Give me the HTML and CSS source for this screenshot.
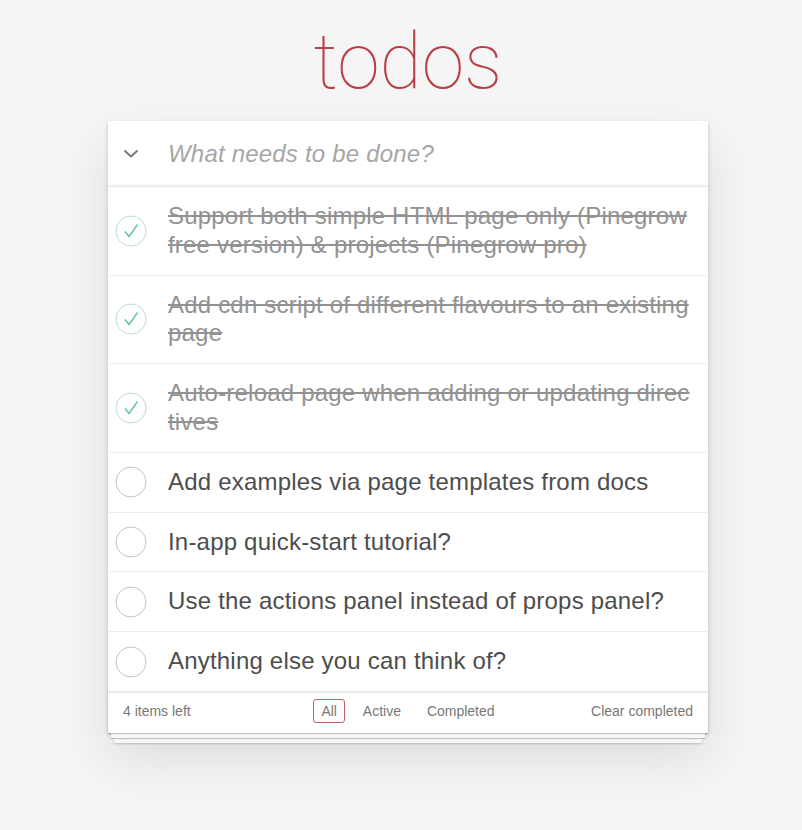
FILE: index.html
```html
<!DOCTYPE html>
<html lang="en">
<head>
    <meta charset="UTF-8">
    <meta name="viewport" content="width=device-width, initial-scale=1.0">
    <title>Todos</title>
    <link rel="stylesheet" href="styles.css">
</head>
<body>
    <div class="page">
        <h1 class="title">todos</h1>
        <section class="todoapp">
            <header class="header">
                <span class="toggle-all">
                    <svg width="16" height="10" viewBox="0 0 16 10"><polyline points="2,2 8,7.5 14,2" fill="none" stroke="#7a7a7a" stroke-width="2" stroke-linecap="round" stroke-linejoin="round"/></svg>
                </span>
                <input class="new-todo" type="text" placeholder="What needs to be done?">
            </header>

            <ul class="todo-list">
                <li class="completed">
                    <span class="toggle">
                        <svg width="32" height="32" viewBox="0 0 32 32"><circle cx="16" cy="16" r="15" fill="none" stroke="#bddad5" stroke-width="1"/><polyline points="10,16.5 14,21.5 22.5,9.5" fill="none" stroke="#5dc2af" stroke-width="1.4"/></svg>
                    </span>
                    <label>Support both simple HTML page only (Pinegrow free version) &amp; projects (Pinegrow pro)</label>
                </li>
                <li class="completed">
                    <span class="toggle">
                        <svg width="32" height="32" viewBox="0 0 32 32"><circle cx="16" cy="16" r="15" fill="none" stroke="#bddad5" stroke-width="1"/><polyline points="10,16.5 14,21.5 22.5,9.5" fill="none" stroke="#5dc2af" stroke-width="1.4"/></svg>
                    </span>
                    <label>Add cdn script of different flavours to an existing page</label>
                </li>
                <li class="completed">
                    <span class="toggle">
                        <svg width="32" height="32" viewBox="0 0 32 32"><circle cx="16" cy="16" r="15" fill="none" stroke="#bddad5" stroke-width="1"/><polyline points="10,16.5 14,21.5 22.5,9.5" fill="none" stroke="#5dc2af" stroke-width="1.4"/></svg>
                    </span>
                    <label>Auto-reload page when adding or updating directives</label>
                </li>
                <li>
                    <span class="toggle">
                        <svg width="32" height="32" viewBox="0 0 32 32"><circle cx="16" cy="16" r="15" fill="none" stroke="#c4c4c4" stroke-width="1"/></svg>
                    </span>
                    <label>Add examples via page templates from docs</label>
                </li>
                <li>
                    <span class="toggle">
                        <svg width="32" height="32" viewBox="0 0 32 32"><circle cx="16" cy="16" r="15" fill="none" stroke="#c4c4c4" stroke-width="1"/></svg>
                    </span>
                    <label>In-app quick-start tutorial?</label>
                </li>
                <li>
                    <span class="toggle">
                        <svg width="32" height="32" viewBox="0 0 32 32"><circle cx="16" cy="16" r="15" fill="none" stroke="#c4c4c4" stroke-width="1"/></svg>
                    </span>
                    <label>Use the actions panel instead of props panel?</label>
                </li>
                <li>
                    <span class="toggle">
                        <svg width="32" height="32" viewBox="0 0 32 32"><circle cx="16" cy="16" r="15" fill="none" stroke="#c4c4c4" stroke-width="1"/></svg>
                    </span>
                    <label>Anything else you can think of?</label>
                </li>
            </ul>

            <footer class="footer">
                <span class="todo-count">4 items left</span>
                <ul class="filters">
                    <li><a class="selected" href="#/">All</a></li>
                    <li><a href="#/active">Active</a></li>
                    <li><a href="#/completed">Completed</a></li>
                </ul>
                <span class="clear-completed">Clear completed</span>
            </footer>
        </section>
    </div>
</body>
</html>
```

FILE: styles.css
```css
body {
    margin: 0;
    background: #f5f5f5;
    font-family: "Liberation Sans", Arial, sans-serif;
    color: #4d4d4d;
    -webkit-font-smoothing: antialiased;
}
.page {
    width: 600px;
    margin: 0 auto;
    padding: 0 0 100px 14px;
}
.title {
    margin: 0 0 19px;
    padding-top: 22px;
    height: 80px;
    font-family: Roboto, "Liberation Sans", sans-serif;
    font-size: 77px;
    line-height: 80px;
    font-weight: 100;
    text-align: center;
    color: #b83f45;
}
.todoapp {
    background: #fff;
    box-shadow: 0 2px 4px rgba(0, 0, 0, 0.2), 0 25px 50px rgba(0, 0, 0, 0.1);
}
.header {
    display: flex;
    align-items: center;
    height: 65px;
    box-shadow: inset 0 -2px 1px rgba(0, 0, 0, 0.03);
}
.toggle-all {
    width: 60px;
    display: flex;
    justify-content: center;
    padding-right: 15px;
    box-sizing: border-box;
}
.new-todo {
    flex: 1;
    border: none;
    outline: none;
    padding: 0 16px 0 0;
    font-family: inherit;
    font-size: 24px;
    letter-spacing: 0.2px;
    color: #4d4d4d;
    background: transparent;
}
.new-todo::placeholder {
    font-style: italic;
    color: #a6a6a6;
}
.todo-list {
    margin: 0;
    padding: 0;
    list-style: none;
    border-top: 1px solid #e6e6e6;
}
.todo-list li {
    display: flex;
    align-items: center;
    border-bottom: 1px solid #ededed;
}
.toggle {
    width: 60px;
    flex-shrink: 0;
    padding-left: 7px;
    box-sizing: border-box;
    display: flex;
}
.todo-list label {
    flex: 1;
    padding: 15px 15px 15px 0;
    font-size: 24px;
    line-height: 1.2;
    letter-spacing: 0.2px;
    word-break: break-all;
    color: #4d4d4d;
}
.todo-list li.completed label {
    color: #929292;
    text-decoration: line-through;
}
.footer {
    display: grid;
    grid-template-columns: 1fr auto 1fr;
    height: 20px;
    line-height: 20px;
    padding: 8px 15px 12px;
    border-top: 1px solid #e6e6e6;
    font-size: 14px;
    color: #777;
    box-shadow: 0 1px 1px rgba(0, 0, 0, 0.2),
                0 8px 0 -3px #f6f6f6,
                0 9px 1px -3px rgba(0, 0, 0, 0.2),
                0 16px 0 -6px #f6f6f6,
                0 17px 2px -6px rgba(0, 0, 0, 0.2);
}
.filters {
    margin: 0;
    padding: 0;
    list-style: none;
}
.filters li {
    display: inline;
}
.filters a {
    margin: 0 3px;
    padding: 3px 7px;
    border: 1px solid transparent;
    border-radius: 3px;
    color: inherit;
    text-decoration: none;
}
.filters a.selected {
    border-color: #c0646a;
}
.clear-completed {
    justify-self: end;
}
```
